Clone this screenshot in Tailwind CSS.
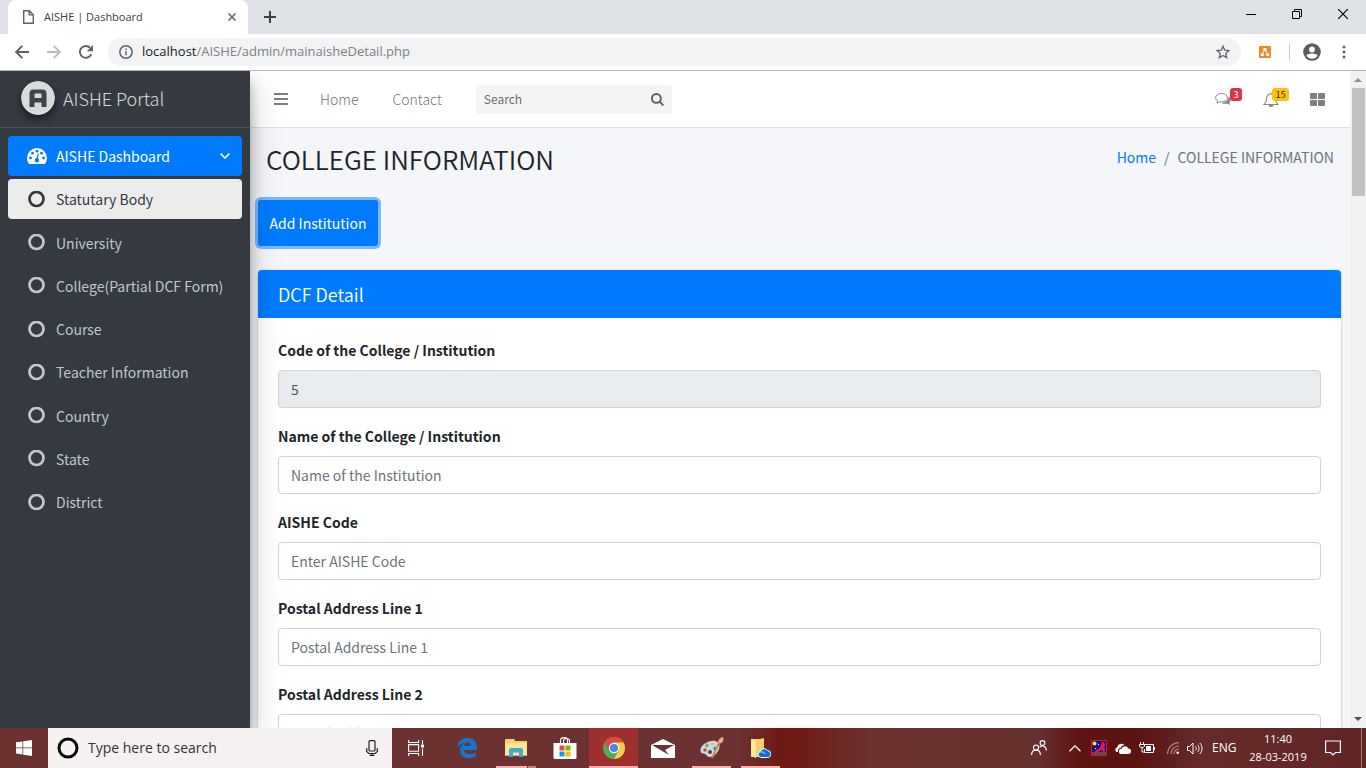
<!DOCTYPE html>
<html lang="en">
<head>
<meta charset="utf-8">
<meta name="viewport" content="width=device-width, initial-scale=1">
<title>AISHE | Dashboard</title>
<script src="https://cdn.jsdelivr.net/npm/@tailwindcss/browser@4"></script>
</head>
<body class="h-screen flex flex-col overflow-hidden bg-white font-['Open_Sans','Noto_Sans',sans-serif]">

<!-- Browser tab strip -->
<div class="h-[34px] shrink-0 bg-[#dee1e6] flex items-stretch pl-2">
  <div class="w-60 bg-white rounded-t-lg flex items-center pl-[15px] pr-2 text-[#3c4043]">
    <svg class="w-[11px] h-[14px] mr-[10px]" viewBox="0 0 11 14" fill="none" stroke="#5f6368" stroke-width="1.4"><path d="M.7.7h5.6l4 4v8.6H.7zM6.2.9v4h4"/></svg>
    <span class="text-[11px] flex-1 whitespace-nowrap">AISHE | Dashboard</span>
    <button aria-label="Close tab" class="p-1"><svg class="size-2" viewBox="0 0 8 8" stroke="#5f6368" stroke-width="1.5"><path d="M.5.5l7 7M7.5.5l-7 7"/></svg></button>
  </div>
  <button aria-label="New tab" class="ml-4 flex items-center"><svg class="size-3" viewBox="0 0 12 12" stroke="#3c4043" stroke-width="2"><path d="M6 0v12M0 6h12"/></svg></button>
  <div class="flex-1"></div>
  <div class="flex items-start text-black">
    <button aria-label="Minimize" class="w-[46px] h-7 flex justify-center items-center"><svg class="size-[10px]" viewBox="0 0 10 10" stroke="#000"><path d="M0 5.5h10"/></svg></button>
    <button aria-label="Restore" class="w-[46px] h-7 flex justify-center items-center"><svg class="size-[10px]" viewBox="0 0 10 10" stroke="#000" fill="none"><path d="M.5 2.5h7v7h-7zM2.5 2.5v-2h7v7h-2"/></svg></button>
    <button aria-label="Close" class="w-[46px] h-7 flex justify-center items-center"><svg class="size-[10px]" viewBox="0 0 10 10" stroke="#000" stroke-width="1.2"><path d="M0 0l10 10M10 0L0 10"/></svg></button>
  </div>
</div>

<!-- Address bar -->
<div class="h-[37px] shrink-0 border-b border-[#b4b5b7] flex items-center pl-[15px] pr-5">
  <button aria-label="Back"><svg class="size-[14px]" viewBox="0 0 14 14" fill="none" stroke="#5f6368" stroke-width="1.9"><path d="M14 7H1.5M7.3.9L1.2 7l6.1 6.1"/></svg></button>
  <button aria-label="Forward" class="ml-[18px]"><svg class="size-[14px]" viewBox="0 0 14 14" fill="none" stroke="#babcbe" stroke-width="1.9"><path d="M0 7h12.5M6.7.9L12.8 7l-6.1 6.1"/></svg></button>
  <button aria-label="Reload" class="ml-[18px]"><svg class="size-[14px]" viewBox="0 0 14 14"><path d="M12.3 9.2A5.9 5.9 0 1 1 11.2 2.9" fill="none" stroke="#5f6368" stroke-width="1.9"/><path d="M14 0v6.2H7.8z" fill="#5f6368"/></svg></button>
  <div class="ml-[15px] flex-1 h-7 rounded-full bg-[#f1f3f4] flex items-center px-[11px]">
    <svg class="size-[14px] mr-[9px]" viewBox="0 0 14 14" fill="none" stroke="#5f6368" stroke-width="1.5"><circle cx="7" cy="7" r="6.2"/><path d="M7 6.2v4M7 3.5V5"/></svg>
    <span class="flex-1 text-[13px] text-[#7d8186] whitespace-nowrap"><span class="text-[#202124]">localhost</span>/AISHE/admin/mainaisheDetail.php</span>
    <button aria-label="Bookmark"><svg class="size-[14px]" viewBox="0 0 14 14" fill="none" stroke="#5f6368" stroke-width="1.3"><path d="M7 1.2l1.7 4 4.3.4-3.3 2.8 1 4.3L7 10.4l-3.7 2.3 1-4.3L1 5.6l4.3-.4z"/></svg></button>
  </div>
  <button aria-label="Diagram extension" class="ml-[18px]"><svg class="size-3" viewBox="0 0 12 12"><rect width="12" height="12" rx="1" fill="#ec8b2c"/><path d="M6 3L3.2 8.500M6 3l2.800 5.500" stroke="#fff"/><path d="M4.500 2h3v2.500h-3zM1.800 7.500h3V10h-3zM7.200 7.500h3V10h-3z" fill="#fff"/></svg></button>
  <div class="w-px h-4 bg-[#c8cacd] ml-[18px]"></div>
  <button aria-label="Profile" class="ml-[13px]"><svg class="size-[18px]" viewBox="0 0 18 18"><circle cx="9" cy="9" r="8.800" fill="#5a5d61"/><circle cx="9" cy="6.500" r="2.900" fill="#fff"/><path d="M3.400 12.800c1.200-3 10-3 11.200 0-1.400 2-3.400 3-5.600 3s-4.200-1-5.600-3z" fill="#fff"/></svg></button>
  <button aria-label="Menu" class="ml-[21px]"><svg class="w-1 h-[14px]" viewBox="0 0 4 14" fill="#5f6368"><circle cx="2" cy="2" r="1.500"/><circle cx="2" cy="7" r="1.500"/><circle cx="2" cy="12" r="1.500"/></svg></button>
</div>

<!-- Page viewport -->
<div class="flex-1 min-h-0 flex overflow-hidden font-['Noto_Sans_CJK_SC',sans-serif]">

  <aside class="relative z-10 w-[250px] shrink-0 bg-[#343a40] shadow-[0_14px_28px_rgba(0,0,0,0.25),0_10px_10px_rgba(0,0,0,0.22)]">
    <a href="#" class="h-[57px] border-b border-[#4b545c] flex items-center pl-[21px] pb-[2px] text-white/80">
      <svg class="size-[34px] mr-2 rounded-full shadow-[0_4px_8px_rgba(0,0,0,0.5)]" viewBox="0 0 34 34"><circle cx="17" cy="17" r="17" fill="#d8dadb"/><path d="M8.500 26V12.500a4 4 0 0 1 4-4h9a4 4 0 0 1 4 4V26h-5v-4.500h-7V26zM13.500 13.500v3.500h7v-3.500a1 1 0 0 0-1-1h-5a1 1 0 0 0-1 1z" fill="#3f4448" fill-rule="evenodd"/></svg>
      <span class="text-lg leading-6 font-light">AISHE Portal</span>
    </a>
    <nav class="p-2">
      <ul class="h-[386px] flex flex-col justify-between text-sm leading-6 text-[#c2c7d0]">
        <li><a href="#" class="h-10 rounded bg-[#007bff] text-white flex items-center pl-[19px] pr-3">
          <svg class="w-5 h-4 mr-[9px]" viewBox="0 0 20 16"><path d="M2 16C.7 14 0 12.200 0 10a10 10 0 0 1 20 0c0 2.200-.7 4-2 6z" fill="#fff"/><g fill="#007bff"><circle cx="3.500" cy="10" r="1.400"/><circle cx="5.500" cy="5.200" r="1.400"/><circle cx="10" cy="3.200" r="1.400"/><circle cx="14.500" cy="5.200" r="1.400"/><circle cx="16.500" cy="10" r="1.400"/><path d="M10.800 5.500l1.100.3-1 4.500a2.200 2.200 0 1 1-1.200-.2z"/></g></svg>
          <span class="flex-1">AISHE Dashboard</span>
          <svg class="w-[10px] h-[6px]" viewBox="0 0 10 6" fill="none" stroke="#fff" stroke-width="1.600"><path d="M.6.600L5 5 9.400.600"/></svg>
        </a></li>
        <li><a href="#" class="h-10 rounded bg-[#ececec] text-[#343a40] flex items-center pl-5"><svg class="size-[17px] mr-[11px]" viewBox="0 0 17 17" fill="none" stroke="currentColor" stroke-width="2.700"><circle cx="8.500" cy="8" r="7"/></svg>Statutary Body</a></li>
        <li><a href="#" class="h-10 flex items-center pl-5"><svg class="size-[17px] mr-[11px]" viewBox="0 0 17 17" fill="none" stroke="currentColor" stroke-width="2.700"><circle cx="8.500" cy="8" r="7"/></svg>University</a></li>
        <li><a href="#" class="h-10 flex items-center pl-5"><svg class="size-[17px] mr-[11px]" viewBox="0 0 17 17" fill="none" stroke="currentColor" stroke-width="2.700"><circle cx="8.500" cy="8" r="7"/></svg>College(Partial DCF Form)</a></li>
        <li><a href="#" class="h-10 flex items-center pl-5"><svg class="size-[17px] mr-[11px]" viewBox="0 0 17 17" fill="none" stroke="currentColor" stroke-width="2.700"><circle cx="8.500" cy="8" r="7"/></svg>Course</a></li>
        <li><a href="#" class="h-10 flex items-center pl-5"><svg class="size-[17px] mr-[11px]" viewBox="0 0 17 17" fill="none" stroke="currentColor" stroke-width="2.700"><circle cx="8.500" cy="8" r="7"/></svg>Teacher Information</a></li>
        <li><a href="#" class="h-10 flex items-center pl-5"><svg class="size-[17px] mr-[11px]" viewBox="0 0 17 17" fill="none" stroke="currentColor" stroke-width="2.700"><circle cx="8.500" cy="8" r="7"/></svg>Country</a></li>
        <li><a href="#" class="h-10 flex items-center pl-5"><svg class="size-[17px] mr-[11px]" viewBox="0 0 17 17" fill="none" stroke="currentColor" stroke-width="2.700"><circle cx="8.500" cy="8" r="7"/></svg>State</a></li>
        <li><a href="#" class="h-10 flex items-center pl-5"><svg class="size-[17px] mr-[11px]" viewBox="0 0 17 17" fill="none" stroke="currentColor" stroke-width="2.700"><circle cx="8.500" cy="8" r="7"/></svg>District</a></li>
      </ul>
    </nav>
  </aside>

  <div class="flex-1 min-w-0 flex flex-col overflow-hidden bg-[#f4f6f9]">
    <header class="h-[57px] shrink-0 bg-white border-b border-[#dee2e6] flex items-center pl-6 pr-[25px] text-sm leading-6 font-light text-black/60">
      <button aria-label="Toggle sidebar"><svg class="w-[14px] h-3" viewBox="0 0 14 12" fill="#7f7f7f"><path d="M0 0h14v2H0zM0 5h14v2H0zM0 10h14v2H0z"/></svg></button>
      <a href="#" class="ml-8">Home</a>
      <a href="#" class="ml-[34px]">Contact</a>
      <form class="ml-[34px] w-[196px] h-[29px] rounded-sm bg-[#f2f4f6] flex items-center px-2">
        <input type="search" aria-label="Search" placeholder="Search" class="flex-1 min-w-0 bg-transparent text-xs font-normal outline-none placeholder:text-black/60">
        <button type="button" aria-label="Submit search"><svg class="size-[13px]" viewBox="0 0 13 13" fill="none" stroke="#5c5d5e" stroke-width="1.900"><circle cx="5.400" cy="5.400" r="4.400"/><path d="M8.600 8.600l3.800 3.800"/></svg></button>
      </form>
      <div class="flex-1"></div>
      <button aria-label="Messages, 3 new" class="relative"><svg class="w-4 h-[14px]" viewBox="0 0 16 14"><path d="M13.500 4.500c2.600 1.500 2.800 4.300.8 6 .1 1 .6 1.600 1.300 2.200-1.300.2-2.600-.3-3.500-1.100-1.700.4-4 .2-5.300-.7 3.900-.2 6.900-2.600 6.700-6.400z" fill="#888"/><path d="M6.500 1.500c3.300 0 5.900 1.800 5.900 4.200s-2.600 4.200-5.900 4.200c-.6 0-1.100 0-1.600-.1-.9.700-2 1.100-3.100 1.200.5-.6.900-1.200 1-2C1.500 8.200.6 7 .6 5.700c0-2.400 2.600-4.200 5.900-4.200z" fill="#fff" stroke="#888"/></svg>
        <span class="absolute left-[15px] -top-[4px] h-[13px] w-3 rounded-[3px] bg-[#dc3545] text-white text-[9px] leading-[13px] font-normal">3</span></button>
      <button aria-label="Notifications, 15 new" class="relative ml-8"><svg class="w-4 h-[15px]" viewBox="0 0 16 15" fill="none" stroke="#888" stroke-width="1.100"><path d="M1 12.500c1.800-1.600 2.500-3.500 2.600-6C3.700 3.500 5.200 2 8 2s4.300 1.500 4.400 4.500c.1 2.500.8 4.400 2.600 6zM8 2V.500"/><path d="M6.300 13a1.700 1.700 0 0 0 3.400 0z" fill="#888"/></svg>
        <span class="absolute left-[9px] -top-[4px] h-[13px] w-[17px] rounded-[3px] bg-[#ffc107] text-[#1f2d3d] text-[9px] leading-[13px] font-normal">15</span></button>
      <button aria-label="Control sidebar" class="ml-[31px]"><svg class="w-[15px] h-[13px]" viewBox="0 0 15 13" fill="#7f7f7f"><rect width="7" height="6" rx="1"/><rect x="8" width="7" height="6" rx="1"/><rect y="7" width="7" height="6" rx="1"/><rect x="8" y="7" width="7" height="6" rx="1"/></svg></button>
    </header>

    <main class="px-2">
      <div class="flex justify-between items-start px-2 pt-[14px]">
        <h1 class="text-[26px] leading-[34px] font-[350] text-[#212529]">COLLEGE INFORMATION</h1>
        <nav aria-label="Breadcrumb" class="text-sm leading-[30px] text-[#6c757d] flex gap-2"><a href="#" class="text-[#007bff]">Home</a><span>/</span><span>COLLEGE INFORMATION</span></nav>
      </div>
      <button class="mt-6 w-[120px] h-[46px] rounded-[3px] bg-[#007bff] text-white text-sm leading-6 whitespace-nowrap ring-3 ring-[#007bff]/50">Add Institution</button>

      <section class="mt-6 mr-[1px] rounded bg-white shadow-[0_0_1px_rgba(0,0,0,0.25),0_1px_3px_rgba(0,0,0,0.2)]">
        <h2 class="h-12 rounded-t bg-[#007bff] text-white text-lg leading-6 font-[350] px-5 py-3">DCF Detail</h2>
        <form class="p-5 flex flex-col gap-4 text-sm leading-6 text-[#212529]">
          <div><label for="code" class="block font-bold mb-2">Code of the College / Institution</label><input id="code" value="5" readonly class="block w-full h-[38px] rounded border border-[#ced4da] bg-[#e9ecef] px-3 text-[#495057]"></div>
          <div><label for="name" class="block font-bold mb-2">Name of the College / Institution</label><input id="name" placeholder="Name of the Institution" class="block w-full h-[38px] rounded border border-[#ced4da] bg-white px-3 placeholder:text-[#6c757d]"></div>
          <div><label for="aishe" class="block font-bold mb-2">AISHE Code</label><input id="aishe" placeholder="Enter AISHE Code" class="block w-full h-[38px] rounded border border-[#ced4da] bg-white px-3 placeholder:text-[#6c757d]"></div>
          <div><label for="addr1" class="block font-bold mb-2">Postal Address Line 1</label><input id="addr1" placeholder="Postal Address Line 1" class="block w-full h-[38px] rounded border border-[#ced4da] bg-white px-3 placeholder:text-[#6c757d]"></div>
          <div><label for="addr2" class="block font-bold mb-2">Postal Address Line 2</label><input id="addr2" placeholder="Postal Address Line 2" class="block w-full h-[38px] rounded border border-[#ced4da] bg-white px-3 placeholder:text-[#6c757d]"></div>
        </form>
      </section>
    </main>
  </div>

  <!-- Page scrollbar -->
  <div class="w-4 shrink-0 bg-[#f1f1f1] flex flex-col items-center justify-between">
    <div class="w-full flex flex-col items-center">
      <svg class="w-4 h-[17px]" viewBox="0 0 16 17" fill="#8f8f8f"><path d="M4 11l4-4 4 4z"/></svg>
      <div class="w-[13px] h-[108px] bg-[#c1c1c1]"></div>
    </div>
    <svg class="w-4 h-[17px]" viewBox="0 0 16 17" fill="#505050"><path d="M4 6l4 4 4-4z"/></svg>
  </div>
</div>

<!-- Windows taskbar -->
<footer class="h-10 shrink-0 flex items-stretch text-white bg-[linear-gradient(to_right,#6b3231_54%,#6f1a17_57%,#6f1c19_59%,#6b3231_64%,#66302e_76%,#5e1412_79%,#5a1311_83%,#642b2a_88%,#5f2625)]">
  <button aria-label="Start" class="w-12 flex items-center justify-center"><svg class="size-4" viewBox="0 0 16 16" fill="#fff"><path d="M0 2.300l6.500-.9v6.100H0zM7.200 1.300L16 0v7.500H7.200zM0 8.300h6.500v6.100L0 13.600zM7.200 8.300H16V16l-8.800-1.300z"/></svg></button>
  <div class="w-[344px] bg-[#f4f1f0] flex items-center pl-[9px] pr-[14px] text-[#333]">
    <svg class="size-[22px] mr-[9px]" viewBox="0 0 22 22" fill="none" stroke="#0b0b0b" stroke-width="3"><circle cx="11" cy="11" r="9"/></svg>
    <input aria-label="Type here to search" placeholder="Type here to search" class="flex-1 min-w-0 bg-transparent text-sm outline-none placeholder:text-[#333]">
    <button aria-label="Voice search"><svg class="w-3 h-4" viewBox="0 0 12 16" fill="none" stroke="#222" stroke-width="1.200"><rect x="3" y=".6" width="6" height="10.400" rx="1"/><path d="M.7 8v3.500l2 2h6.600l2-2V8M6 13.500v2M3.500 15.400h5"/></svg></button>
  </div>
  <button aria-label="Task view" class="w-[50px] pr-[2px] flex items-center justify-center"><svg class="size-4" viewBox="0 0 16 16" fill="none" stroke="#fff" stroke-width="1.100"><path d="M.6 0v2.500h10V0M.6 16v-2.500h10V16M.6 4.600h10v6.600H.6zM14.500 0v4M14.500 8.500V16"/><path d="M13 4.500h3v3h-3z" fill="#fff" stroke="none"/></svg></button>
  <button aria-label="Edge" class="w-[49px] flex items-center justify-center"><svg class="size-5" viewBox="0 0 20 20"><path d="M0 9.200C.7 3.800 4.400 0 10.300 0 16.500 0 20 4.200 20 9.800v2.100H7c.1 3 2.500 4.300 5.800 4.300 2.200 0 4.200-.6 5.900-1.600v4c-2 1-4.300 1.400-6.800 1.400-5.300 0-9-2.800-9-7.800 0-3.400 1.900-6 5-7.300C4.800 5.400 2 6.800 0 9.200zm7.100-1.100h6.600c0-2.500-1.100-3.800-3.200-3.800-2 0-3.100 1.500-3.400 3.800z" fill="#0f78d4"/></svg></button>
  <button aria-label="File Explorer" class="w-[49px] relative flex items-center justify-center"><svg class="w-[22px] h-[18px]" viewBox="0 0 22 18"><path d="M0 1a1 1 0 0 1 1-1h8l1 2h12v14.500H0z" fill="#fbd165"/><path d="M0 4h22v12.500H0z" fill="#ffe394"/><path d="M4 18v-7.500l1.500-1.500h11L18 10.500V18h-4v-4.500H8V18z" fill="#41a9d6"/></svg><span class="absolute bottom-0 left-[5px] w-[31px] h-[2px] bg-[#fbb0af]"></span><span class="absolute bottom-0 left-[37px] w-2 h-[2px] bg-[#c08280]"></span></button>
  <button aria-label="Microsoft Store" class="w-[49px] flex items-center justify-center"><svg class="w-6 h-[22px]" viewBox="0 0 24 22"><path d="M7.500 7V3.500C7.500 1.500 9 .6 11 .6s3.500.9 3.500 2.900V6M10.500 6V4c0-1.700 1.200-2.500 2.800-2.500S16.500 2.300 16.500 4v3" fill="none" stroke="#fff" stroke-width="1.100"/><path d="M.5 6h23v14.500a1.500 1.500 0 0 1-1.500 1.500H2a1.500 1.500 0 0 1-1.500-1.500z" fill="#fff"/><path d="M6.500 8.500h5v5h-5z" fill="#f25022"/><path d="M12.500 8.500h5v5h-5z" fill="#7fba00"/><path d="M6.500 14.500h5v5h-5z" fill="#00a4ef"/><path d="M12.500 14.500h5v5h-5z" fill="#ffb900"/></svg></button>
  <button aria-label="Chrome" class="w-[49px] relative flex items-center justify-center bg-[#a03030]"><svg class="size-[22px]" viewBox="0 0 22 22"><circle cx="11" cy="11" r="11" fill="#4caf50"/><path d="M11 11L1.500 5.500A11 11 0 0 1 20.500 5.500H11z" fill="#dd4b3e"/><path d="M1.500 5.500L6.200 13.800 11 11 11 5.500z" fill="#dd4b3e"/><path d="M20.500 5.500H11L15.800 13.800 11 22A11 11 0 0 0 20.500 5.500z" fill="#ffcd40"/><circle cx="11" cy="11" r="5.200" fill="#fff"/><circle cx="11" cy="11" r="4.100" fill="#4a86e8"/></svg><span class="absolute bottom-0 inset-x-0 h-[2px] bg-[#fbb0af]"></span></button>
  <button aria-label="Mail" class="w-[49px] flex items-center justify-center"><svg class="w-6 h-[19px]" viewBox="0 0 24 19"><path d="M0 6L12 0l12 6v13H0z" fill="#fff"/><path d="M1 6h22L14 11l4 5z" fill="#6b3231"/></svg></button>
  <button aria-label="Paint" class="w-[49px] relative flex items-center justify-center"><svg class="w-6 h-[22px]" viewBox="0 0 24 22"><path d="M9 4.500c5-1.800 10-.3 10.500 4 .5 5-4.500 11-9.500 11.500-3 .2-3-2.500-5-3S.8 17 .5 13.500C.3 9.500 4.500 6 9 4.500z" fill="#c5dbe8"/><circle cx="5" cy="13" r="1.800" fill="#d9423a"/><circle cx="7" cy="8.500" r="1.700" fill="#6cb544"/><circle cx="12.500" cy="7" r="1.700" fill="#f5c13a"/><circle cx="15" cy="11.500" r="1.700" fill="#3d7fd0"/><circle cx="10" cy="15" r="2" fill="#703431"/><path d="M20.500 5.500L13.500 20l-2 2 .500-3L18.500 4.500z" fill="#c58b52"/><path d="M18 5c0-2 2-4.500 5-5 1 2.500 0 5-2 6.500z" fill="#e2b27c"/></svg><span class="absolute bottom-0 inset-x-[5px] h-[2px] bg-[#fbb0af]"></span></button>
  <button aria-label="OneDrive folder" class="w-[49px] relative flex items-center justify-center"><svg class="w-5 h-[21px]" viewBox="0 0 20 21"><path d="M0 1h9l4-1v17l-4 2H0z" fill="#f5cf6e"/><path d="M0 1l5 2v17l-5-2z" fill="#ffe69b"/><path d="M9.500 19.500a3 3 0 0 1-.5-5.800 4.200 4.200 0 0 1 7.500-1.200 3.600 3.600 0 0 1 1 7z" fill="#1173cf" stroke="#fff"/><path d="M9.300 14c2.200-.6 3.800.5 4.700 2" fill="none" stroke="#fff" stroke-width=".8"/></svg><span class="absolute bottom-0 inset-x-[5px] h-[2px] bg-[#fbb0af]"></span></button>
  <div class="flex-1"></div>

  <div class="flex items-center text-xs">
    <button aria-label="People"><svg class="w-4 h-4" viewBox="0 0 16 16" fill="none" stroke="#fff" stroke-width="1.100"><circle cx="5" cy="7.500" r="2.500"/><path d="M.6 15c0-6.500 8.800-6.500 8.800 0"/><circle cx="11.500" cy="3" r="2.400"/><path d="M8.500 7.500c2.500-3 6.900-1.500 6.900 3"/></svg></button>
    <button aria-label="Show hidden icons" class="ml-[22px]"><svg class="w-3 h-[7px]" viewBox="0 0 12 7" fill="none" stroke="#fff" stroke-width="1.300"><path d="M.5 6.300L6 .900l5.500 5.400"/></svg></button>
    <svg class="ml-[10px] size-4" viewBox="0 0 16 16"><path d="M0 0h16v16H0z" fill="#e1121d"/><path d="M1 1h14v11H1z" fill="#14129c"/><path d="M1 12h14v3H1z" fill="#554f55"/><circle cx="3.500" cy="3.500" r="2" fill="#ffe51f"/><path d="M11 2h2l1 3-1 2 1 3-1 3-2-3-3 1-3 3H3l2-4 4-2 1-3z" fill="#e3203c"/><path d="M4 9l1-1M7 5l1-1" stroke="#fff"/></svg>
    <svg class="ml-2 w-4 h-[11px]" viewBox="0 0 16 11" fill="#fff"><path d="M1.500 9A2.500 2.500 0 0 1 2 4.500 4.500 4.500 0 0 1 9.500 2C7.500 2 6 3.500 5.500 5 3.500 5 2.500 7 3 9z"/><path d="M6.500 11a2.600 2.600 0 0 1 0-5.200 3.600 3.600 0 0 1 6.800-.2A2.700 2.700 0 0 1 13.500 11z"/></svg>
    <svg class="ml-2 w-4 h-3" viewBox="0 0 16 12" fill="none" stroke="#fff"><path d="M5.500 2.500h9v8h-9V7M15.500 5v3M1.500 0v2M4.500 0v2M.5 2.500h5V4C5.500 6 .5 6 .5 4zM3 5.500V10h2"/><path d="M7 4h5v5H7z" fill="#fff" stroke="none"/></svg>
    <svg class="ml-3 w-3 h-3" viewBox="0 0 12 12" fill="none" stroke="#b98b89" stroke-width="1.100"><path d="M.6 12A11.400 11.400 0 0 1 12 .6M4 12a8 8 0 0 1 8-8M7 12a5 5 0 0 1 5-5"/><circle cx="10.700" cy="10.700" r="1.300" fill="#fff" stroke="none"/></svg>
    <svg class="ml-2 w-4 h-[13px]" viewBox="0 0 16 13" fill="none" stroke="#fff"><path d="M.5 4.500h2L6 1v11L2.500 8.500h-2zM8.500 4.500c1 1 1 3 0 4M10.500 2.800c2 2 2 5.400 0 7.400M12.800 1c3 3 3 8 0 11"/></svg>
    <span class="ml-[9px] w-7">ENG</span>
    <div class="ml-[7px] w-[62px] text-center leading-[18px] whitespace-nowrap text-[11px]">11:40<br>28-03-2019</div>
    <button aria-label="Action center" class="ml-4"><svg class="size-4" viewBox="0 0 16 16" fill="none" stroke="#fff" stroke-width="1.200"><path d="M.6 1h14.800v11.500h-4.900L8 15l-2.500-2.500H.6z"/></svg></button>
    <div class="ml-5 mr-1 w-px h-10 bg-white/40"></div>
  </div>
</footer>
</body>
</html>
